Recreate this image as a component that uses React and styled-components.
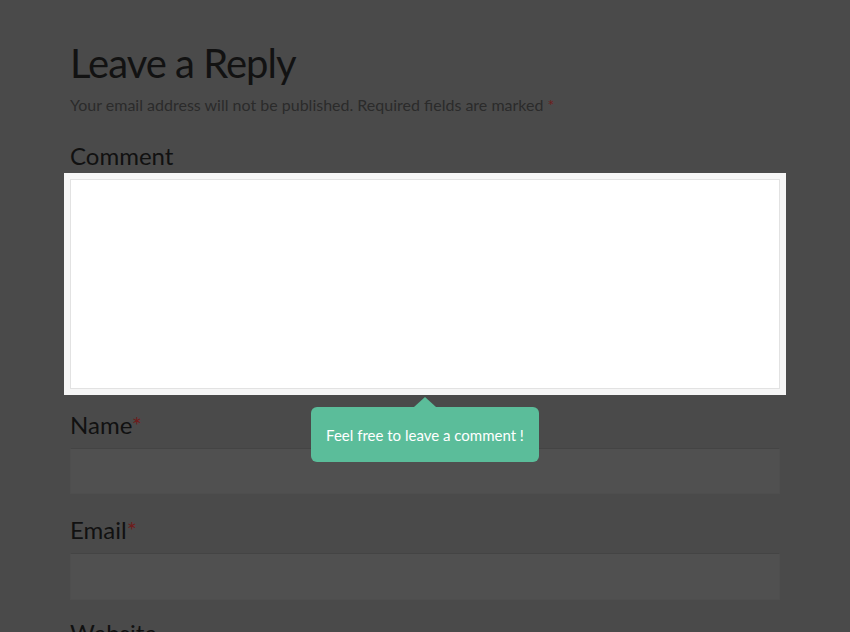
import React from 'react'
import styled, { createGlobalStyle } from 'styled-components'

const Global = createGlobalStyle`
  html, body {
    margin: 0;
    padding: 0;
    background: #4a4a4a;
    font-family: 'Lato', 'Liberation Sans', sans-serif;
  }
  * { box-sizing: border-box; }
`

const Page = styled.div`
  width: 850px;
  height: 632px;
  overflow: hidden;
  background: #4a4a4a;
  padding: 38px 70px 0;
`

const Title = styled.h1`
  margin: 0 0 6px;
  font-size: 40px;
  line-height: 50px;
  font-weight: 400;
  letter-spacing: -1px;
  color: #121212;
`

const Notes = styled.p`
  margin: 0 0 25px;
  font-size: 16px;
  line-height: 22px;
  color: #2b2b2b;
`

const Req = styled.span`
  color: #6e1c1c;
  margin-left: ${props => props.gap || 0}px;
`

const Field = styled.div`
  margin-bottom: ${props => props.gap}px;
`

const Label = styled.label`
  display: block;
  font-size: 24px;
  line-height: 30px;
  color: #111;
  margin-bottom: ${props => props.gap || 8}px;
`

const Spot = styled.div`
  position: relative;
  margin: 0 -6px;
  padding: 6px;
  background: #f6f6f6;
`

const TextArea = styled.div`
  height: 210px;
  background: #fff;
  border: 1px solid #e2e2e2;
`

const Input = styled.div`
  height: ${props => props.h}px;
  background: #505050;
  border: 1px solid #4e4e4e;
  border-top-color: #444;
`

const Tip = styled.div`
  position: absolute;
  top: calc(100% + 12px);
  left: 50%;
  transform: translateX(-50%);
  width: 228px;
  height: 55px;
  border-radius: 6px;
  background: #5bbd9a;
  color: #fff;
  font-size: 15px;
  display: flex;
  align-items: center;
  justify-content: center;

  &::before {
    content: '';
    position: absolute;
    top: -10px;
    left: 50%;
    margin-left: -11px;
    border-left: 11px solid transparent;
    border-right: 11px solid transparent;
    border-bottom: 10px solid #5bbd9a;
  }
`

export default function App () {
  return (
    <Page>
      <Global />
      <Title>Leave a Reply</Title>
      <Notes>
        Your email address will not be published. Required fields are marked <Req>*</Req>
      </Notes>
      <Field gap={15}>
        <Label gap={2}>Comment</Label>
        <Spot>
          <TextArea />
          <Tip>Feel free to leave a comment !</Tip>
        </Spot>
      </Field>
      <Field gap={21}>
        <Label>Name<Req>*</Req></Label>
        <Input h={46} />
      </Field>
      <Field gap={18}>
        <Label>Email<Req>*</Req></Label>
        <Input h={47} />
      </Field>
      <Field gap={0}>
        <Label>Website</Label>
      </Field>
    </Page>
  )
}
